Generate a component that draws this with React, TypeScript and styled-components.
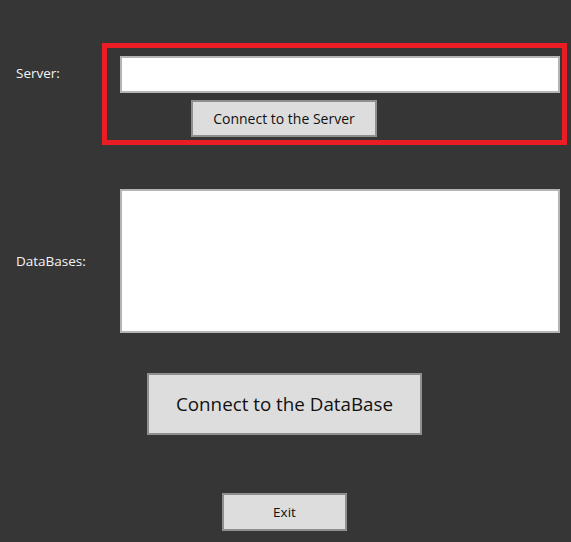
import React from "react";
import styled, { createGlobalStyle } from "styled-components";

const Global = createGlobalStyle`
  html, body {
    margin: 0;
    padding: 0;
    background: #363636;
  }
  body {
    font-family: "Open Sans", "Noto Sans", "Liberation Sans", sans-serif;
  }
  * { box-sizing: border-box; }
`;

const Page = styled.div`
  width: 571px;
  height: 542px;
  background: #363636;
  display: flex;
  flex-direction: column;
  padding: 43px 0 0 0;
  overflow: hidden;
`;

const Row = styled.div`
  display: flex;
  align-items: center;
`;

const Label = styled.div<{ $width: number }>`
  width: ${(p) => p.$width}px;
  padding-left: 16px;
  color: #f4f4f4;
  font-size: 13.5px;
  flex-shrink: 0;
`;

const Highlight = styled.div`
  width: 465px;
  height: 102px;
  border: 5px solid #ea1c24;
  display: flex;
  flex-direction: column;
  padding: 8px 2px 0 13px;
  gap: 7px;
  align-self: flex-start;
`;

const ServerRow = styled(Row)`
  align-items: flex-start;
`;

const ServerLabel = styled(Label)`
  margin-top: 21px;
`;

const TextBox = styled.div`
  width: 440px;
  height: 37px;
  background: #ffffff;
  border: 2px solid #b4b4b4;
`;

const Button = styled.button<{ $w: number; $h: number; $size: number }>`
  width: ${(p) => p.$w}px;
  height: ${(p) => p.$h}px;
  background: #dddddd;
  border: 2px solid #8f8f8f;
  color: #111111;
  font-family: "Open Sans", "Noto Sans", "Liberation Sans", sans-serif;
  font-size: ${(p) => p.$size}px;
  padding: 0;
  display: flex;
  align-items: center;
  justify-content: center;
  flex-shrink: 0;
`;

const ServerButton = styled(Button)`
  margin-left: 71px;
`;

const DbRow = styled(Row)`
  margin-top: 44px;
`;

const ListBox = styled.div`
  width: 440px;
  height: 144px;
  background: #ffffff;
  border: 2px solid #b4b4b4;
`;

const Centered = styled.div<{ $top: number; $left: number }>`
  display: flex;
  margin-top: ${(p) => p.$top}px;
  padding-left: ${(p) => p.$left}px;
`;

export default function App() {
  return (
    <>
      <Global />
      <Page>
        <ServerRow>
          <ServerLabel $width={102}>Server:</ServerLabel>
          <Highlight>
            <TextBox />
            <ServerButton $w={186} $h={37} $size={14}>
              Connect to the Server
            </ServerButton>
          </Highlight>
        </ServerRow>
        <DbRow>
          <Label $width={120}>DataBases:</Label>
          <ListBox />
        </DbRow>
        <Centered $top={40} $left={147}>
          <Button $w={275} $h={62} $size={18.8}>
            Connect to the DataBase
          </Button>
        </Centered>
        <Centered $top={58} $left={222}>
          <Button $w={125} $h={38} $size={13.5}>
            Exit
          </Button>
        </Centered>
      </Page>
    </>
  );
}
